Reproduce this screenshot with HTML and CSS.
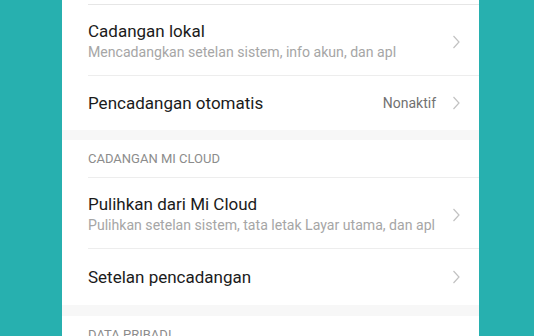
FILE: index.html
```html
<!DOCTYPE html>
<html>
<head>
<meta charset="utf-8">
<link rel="stylesheet" href="styles.css">
</head>
<body>
<div class="page">
  <div class="panel">
    <div class="top"></div>
    <div class="row two">
      <div class="texts">
        <div class="title">Cadangan lokal</div>
        <div class="sub">Mencadangkan setelan sistem, info akun, dan apl</div>
      </div>
      <svg class="chev" width="8" height="14" viewBox="0 0 8 14"><path d="M1.5 1 L7 7 L1.5 13" fill="none" stroke="#c2c2c2" stroke-width="1.2"/></svg>
    </div>
    <div class="row one last">
      <div class="texts">
        <div class="title">Pencadangan otomatis</div>
      </div>
      <span class="value">Nonaktif</span>
      <svg class="chev" width="8" height="14" viewBox="0 0 8 14"><path d="M1.5 1 L7 7 L1.5 13" fill="none" stroke="#c2c2c2" stroke-width="1.2"/></svg>
    </div>
    <div class="band"></div>
    <div class="header">CADANGAN MI CLOUD</div>
    <div class="row two">
      <div class="texts">
        <div class="title">Pulihkan dari Mi Cloud</div>
        <div class="sub">Pulihkan setelan sistem, tata letak Layar utama, dan apl</div>
      </div>
      <svg class="chev" width="8" height="14" viewBox="0 0 8 14"><path d="M1.5 1 L7 7 L1.5 13" fill="none" stroke="#c2c2c2" stroke-width="1.2"/></svg>
    </div>
    <div class="row one last tall">
      <div class="texts">
        <div class="title">Setelan pencadangan</div>
      </div>
      <svg class="chev" width="8" height="14" viewBox="0 0 8 14"><path d="M1.5 1 L7 7 L1.5 13" fill="none" stroke="#c2c2c2" stroke-width="1.2"/></svg>
    </div>
    <div class="band b2"></div>
    <div class="header nob">DATA PRIBADI</div>
  </div>
</div>
</body>
</html>
```

FILE: styles.css
```css
html, body {
  margin: 0;
  padding: 0;
  background: #27b0af;
  overflow: hidden;
}
body {
  width: 534px;
  height: 336px;
  font-family: Roboto, "Noto Sans", sans-serif;
}
.page {
  display: flex;
  padding-left: 62px;
  height: 336px;
}
.panel {
  width: 417px;
  background: #ffffff;
  display: flex;
  flex-direction: column;
}
.top {
  height: 4px;
  margin-left: 26px;
  border-bottom: 1px solid #e6e6e6;
  flex: none;
}
.row {
  flex: none;
  display: flex;
  align-items: center;
  margin-left: 26px;
  padding-right: 19px;
  border-bottom: 1px solid #ededed;
}
.row.last {
  border-bottom: none;
}
.row.two {
  padding-top: 16px;
  padding-bottom: 13px;
}
.row.one {
  padding-top: 17px;
  padding-bottom: 17px;
}
.row.tall {
  padding-top: 18px;
  padding-bottom: 18px;
}
.texts {
  flex: 1;
  min-width: 0;
}
.title {
  font-size: 17px;
  line-height: 20px;
  color: #1b1b1b;
  white-space: nowrap;
}
.sub {
  margin-top: 1px;
  font-size: 14.1px;
  line-height: 20px;
  color: #a6a6a6;
  white-space: nowrap;
}
.value {
  font-size: 14px;
  line-height: 20px;
  color: #717171;
  margin-right: 16px;
}
.chev {
  flex: none;
  display: block;
}
.band {
  flex: none;
  height: 10px;
  background: #f7f7f7;
}
.band.b2 {
  height: 11px;
}
.header {
  flex: none;
  margin-left: 26px;
  padding-top: 10px;
  padding-bottom: 9px;
  font-size: 13px;
  line-height: 18px;
  color: #8c8c8c;
  border-bottom: 1px solid #ededed;
}
.header.nob {
  border-bottom: none;
}
```
